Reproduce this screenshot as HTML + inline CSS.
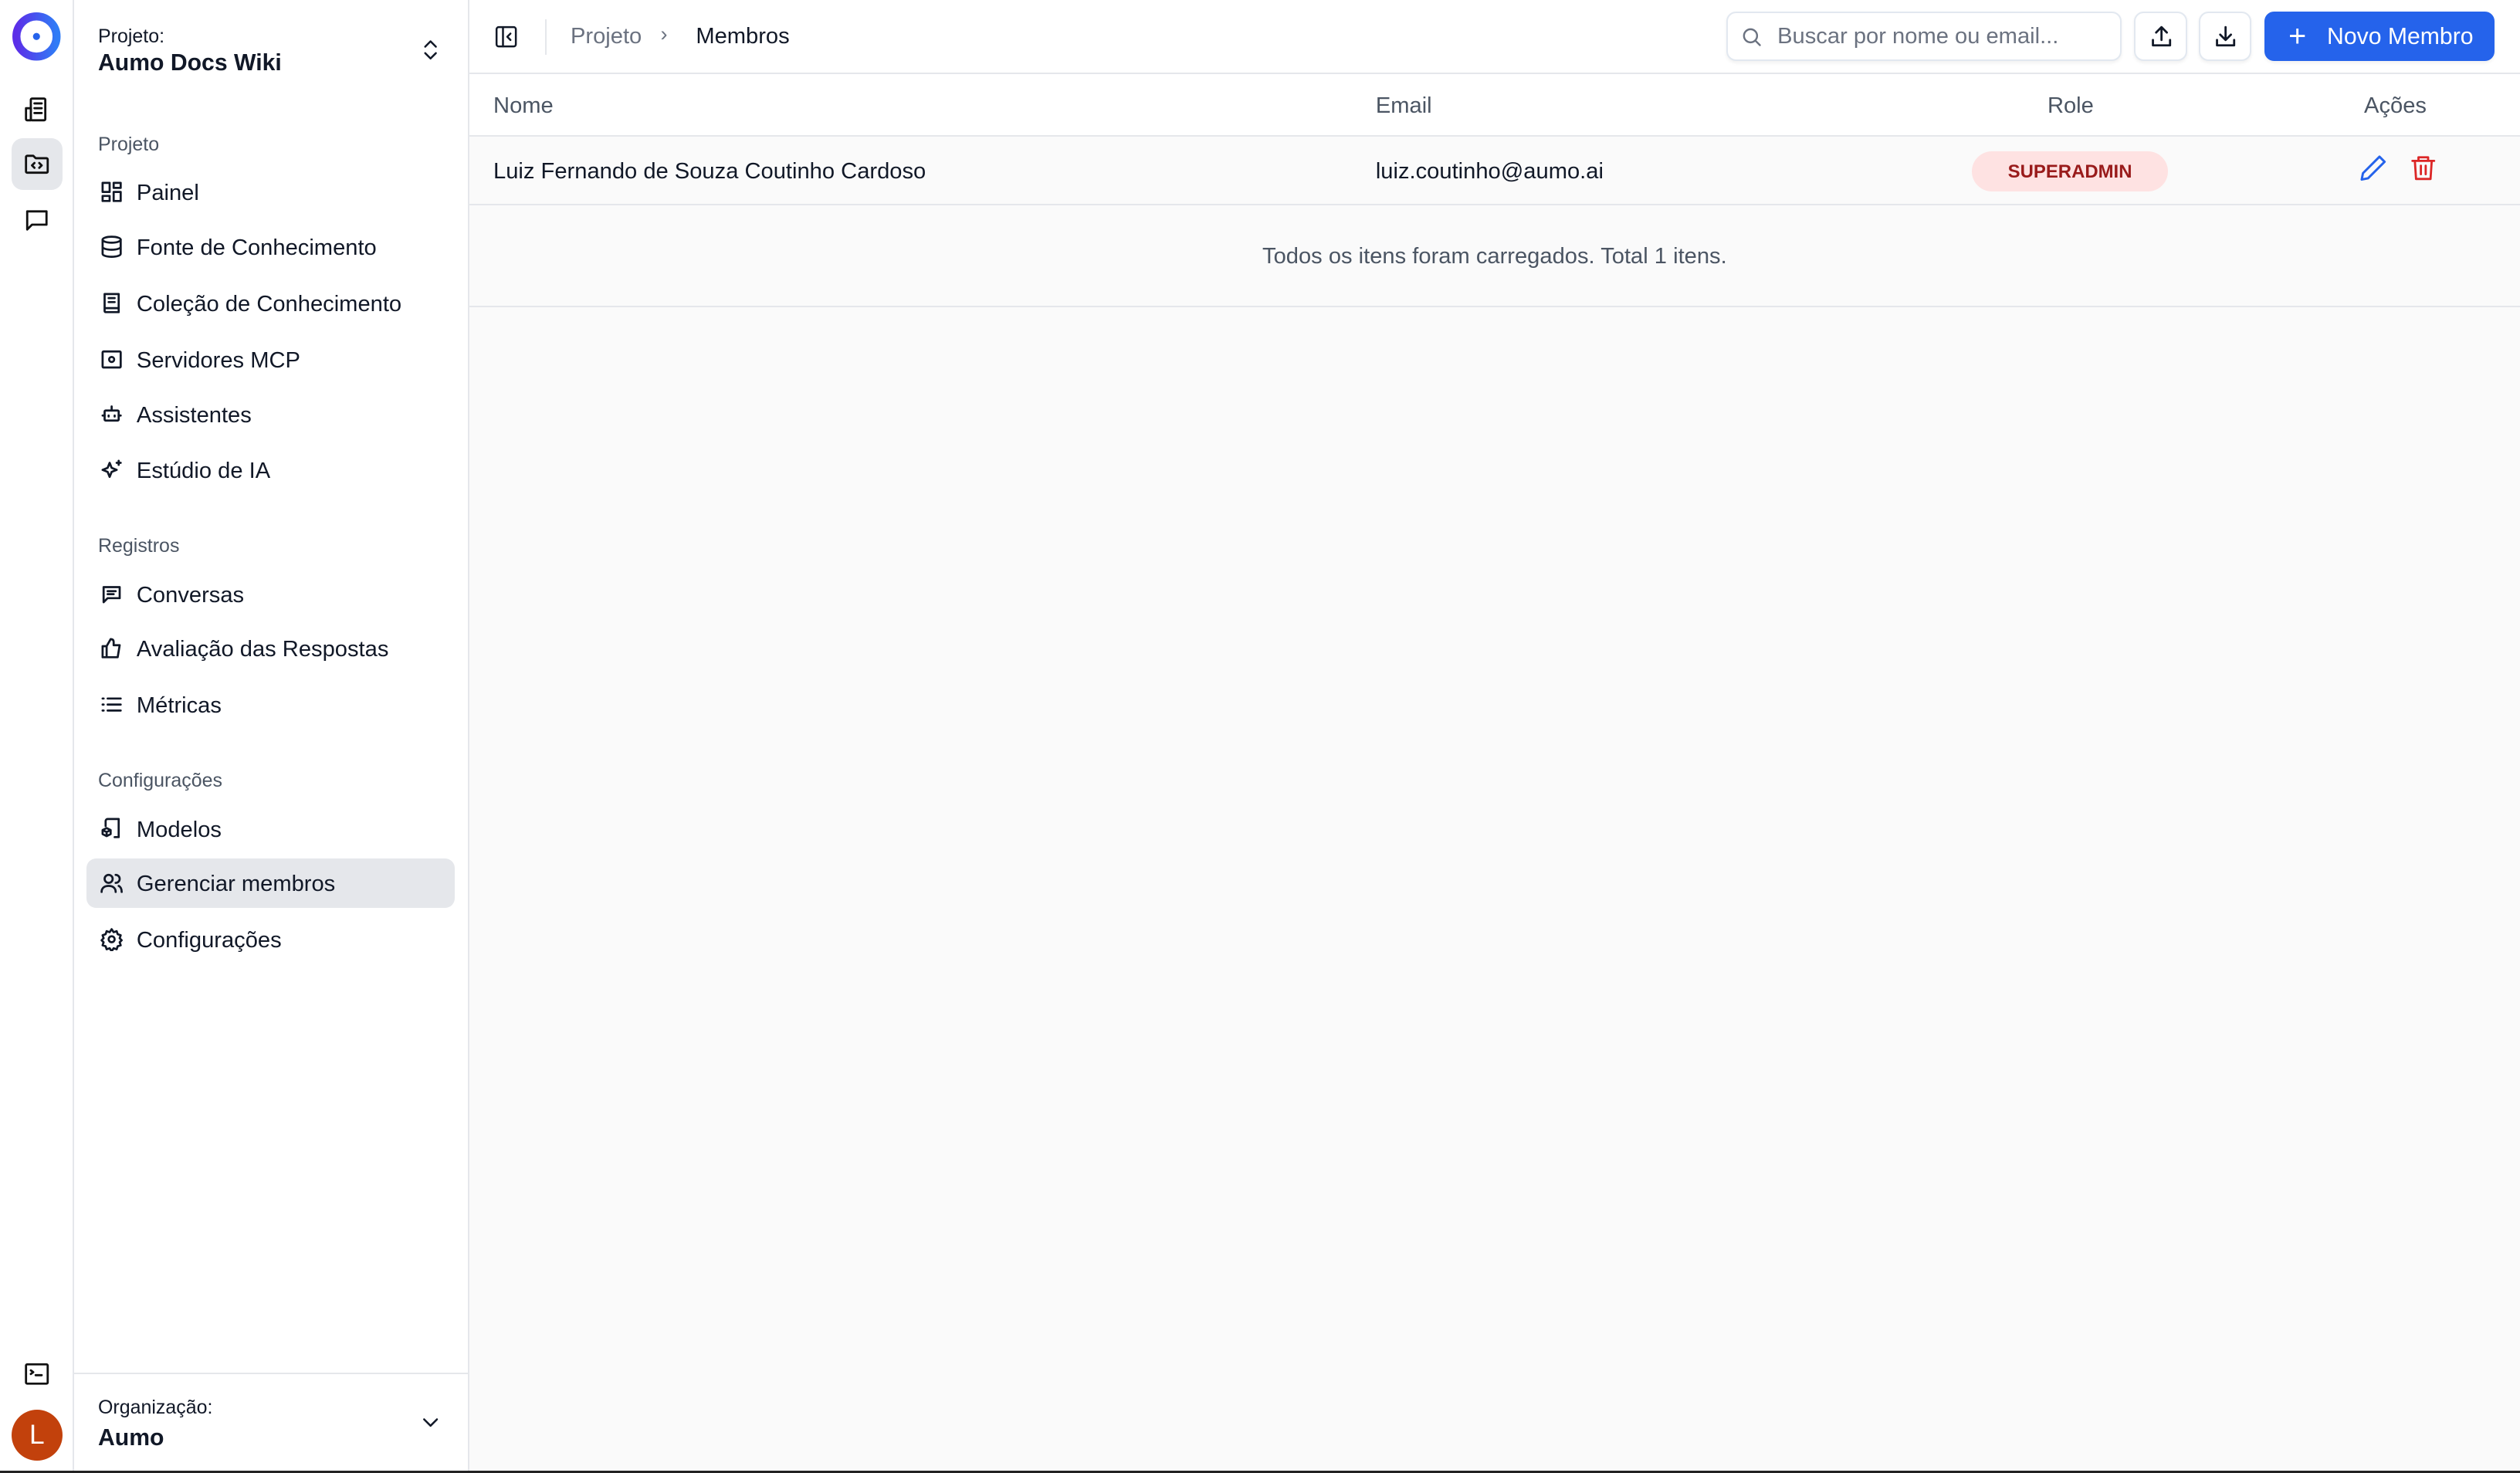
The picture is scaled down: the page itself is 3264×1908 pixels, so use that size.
<!DOCTYPE html>
<html><head><meta charset="utf-8"><style>
*{box-sizing:border-box;margin:0;padding:0}
html,body{width:3264px;height:1908px;overflow:hidden;background:#fafafa}
#r{zoom:2.0816;width:1568px;height:917px;position:relative;font-family:"Liberation Sans",sans-serif;color:#111827}
.rail{position:absolute;left:0;top:0;width:46px;height:917px;background:#fff;border-right:1px solid #e5e7eb}
.side{position:absolute;left:46px;top:0;width:246px;height:917px;background:#fff;border-right:1px solid #e5e7eb}
.main{position:absolute;left:292px;top:0;right:0;height:917px;background:#fafafa}
svg{fill:none;stroke:currentColor;stroke-width:1.8;stroke-linecap:round;stroke-linejoin:round}
.ri{position:absolute;left:14px;width:18px;height:18px;color:#111}
.it{position:absolute;left:8px;width:229px;height:31px;font-size:14px;display:flex;align-items:center;padding-left:8px;padding-top:2px;border-radius:6px}
.it svg{width:15px;height:15px;margin-right:8px;stroke-width:2.1;margin-top:-2px}
.sec{position:absolute;left:15px;font-size:12px;color:#4b5563}
.top{position:absolute;left:0;top:0;right:0;height:46px;background:#fff;border-bottom:1px solid #e5e7eb}
.btn{position:absolute;top:7px;height:31px;border:1px solid #e2e8f0;border-radius:6px;background:#fff;box-shadow:0 1px 2px rgba(0,0,0,.06)}
</style></head><body><div id="r">
<div class="rail">
<svg style="position:absolute;left:7px;top:7px;width:31px;height:31px;stroke:none" viewBox="0 0 31 31"><defs><linearGradient id="g" x1="0" x2="1"><stop offset="0" stop-color="#5b2ee8"/><stop offset="1" stop-color="#2f7cf6"/></linearGradient></defs><circle cx="15.5" cy="15.5" r="12.5" fill="none" stroke="url(#g)" stroke-width="5"/><circle cx="15.5" cy="15.5" r="2.2" fill="#2563eb"/></svg>
<svg class="ri" style="top:59px" viewBox="0 0 24 24"><rect x="7" y="3" width="12" height="18" rx="1"/><path d="M3 11h4v10H4a1 1 0 0 1-1-1zM10 7h6M10 11h6M10 15h6"/></svg>
<div style="position:absolute;left:7px;top:86px;width:32px;height:32px;background:#e5e7eb;border-radius:7px"></div>
<svg class="ri" style="top:93px" viewBox="0 0 24 24"><path d="M3 6a1 1 0 0 1 1-1h5l2 2h9a1 1 0 0 1 1 1v10a1 1 0 0 1-1 1H4a1 1 0 0 1-1-1z"/><path d="M10 11l-2 2 2 2M14 11l2 2-2 2"/></svg>
<svg class="ri" style="top:128px" viewBox="0 0 24 24"><path d="M4 5h16v11H8l-4 4z"/></svg>
<svg class="ri" style="top:846px" viewBox="0 0 24 24"><rect x="3" y="4" width="18" height="16" rx="1"/><path d="M7 9l2 1.5L7 12M11 13h5"/></svg>
<div style="position:absolute;left:7px;top:877px;width:32px;height:32px;border-radius:50%;background:#c2410c;color:#fff;font-size:17px;text-align:center;line-height:32px">L</div>
</div>
<div class="side">
<div style="position:absolute;left:15px;top:16px;font-size:12px">Projeto:</div>
<div style="position:absolute;left:15px;top:31px;font-size:14.5px;font-weight:bold">Aumo Docs Wiki</div>
<svg style="position:absolute;left:214px;top:23px;width:16px;height:16px" viewBox="0 0 24 24"><path d="M7 9l5-5 5 5M7 15l5 5 5-5"/></svg>
<div class="sec" style="top:83px">Projeto</div>
<div class="it" style="top:104px"><svg viewBox="0 0 24 24"><rect x="3" y="3" width="7" height="9"/><rect x="14" y="3" width="7" height="5"/><rect x="14" y="12" width="7" height="9"/><rect x="3" y="16" width="7" height="5"/></svg>Painel</div>
<div class="it" style="top:138px"><svg viewBox="0 0 24 24"><ellipse cx="12" cy="5" rx="9" ry="3"/><path d="M3 5v14c0 1.7 4 3 9 3s9-1.3 9-3V5M3 12c0 1.7 4 3 9 3s9-1.3 9-3"/></svg>Fonte de Conhecimento</div>
<div class="it" style="top:173px"><svg viewBox="0 0 24 24"><path d="M5 3h14v18H6a1 1 0 0 1-1-1zM5 17h14M9 7h6M9 11h6"/></svg>Coleção de Conhecimento</div>
<div class="it" style="top:208px"><svg viewBox="0 0 24 24"><rect x="3" y="4" width="18" height="16" rx="1"/><circle cx="12" cy="12" r="2.5"/></svg>Servidores MCP</div>
<div class="it" style="top:242px"><svg viewBox="0 0 24 24"><rect x="5" y="9" width="14" height="10" rx="1"/><path d="M12 9V5M3 14h2M19 14h2M9 14v1M15 14v1"/></svg>Assistentes</div>
<div class="it" style="top:277px"><svg viewBox="0 0 24 24"><path d="M10 5l2 5 5 2-5 2-2 5-2-5-5-2 5-2zM19 3v4M17 5h4"/></svg>Estúdio de IA</div>
<div class="sec" style="top:333px">Registros</div>
<div class="it" style="top:354px"><svg viewBox="0 0 24 24"><path d="M4 5h16v11H8l-4 4zM8 9h8M8 12h6"/></svg>Conversas</div>
<div class="it" style="top:388px"><svg viewBox="0 0 24 24"><path d="M7 10v11H3V10zM7 10l4-7c2 0 3 1 3 3v3h6l-2 12H7"/></svg>Avaliação das Respostas</div>
<div class="it" style="top:423px"><svg viewBox="0 0 24 24"><path d="M3 6h1M3 12h1M3 18h1M8 6h13M8 12h13M8 18h13"/></svg>Métricas</div>
<div class="sec" style="top:479px">Configurações</div>
<div class="it" style="top:500px"><svg viewBox="0 0 24 24"><path d="M13 3h6v18h-4M6 10V5a2 2 0 0 1 2-2h5"/><path d="M3 14l4-2 4 2v4l-4 2-4-2zM3 14l4 2 4-2M7 16v4"/></svg>Modelos</div>
<div class="it" style="top:534px;background:#e5e7eb"><svg viewBox="0 0 24 24"><circle cx="9" cy="8" r="4"/><path d="M2 21c0-4 3-6 7-6s7 2 7 6M16 4a4 4 0 0 1 0 8M19 15c2 1 3 3 3 6"/></svg>Gerenciar membros</div>
<div class="it" style="top:569px"><svg viewBox="0 0 24 24"><circle cx="12" cy="12" r="3"/><path d="M12 2l2 3 3-1 1 3 3 1-1 3 2 2-2 2 1 3-3 1-1 3-3-1-2 3-2-3-3 1-1-3-3-1 1-3-2-2 2-2-1-3 3-1 1-3 3 1z"/></svg>Configurações</div>
<div style="position:absolute;left:0;right:0;top:854px;border-top:1px solid #e5e7eb"></div>
<div style="position:absolute;left:15px;top:869px;font-size:12px">Organização:</div>
<div style="position:absolute;left:15px;top:887px;font-size:14.5px;font-weight:bold">Aumo</div>
<svg style="position:absolute;left:214px;top:877px;width:16px;height:16px" viewBox="0 0 24 24"><path d="M6 9l6 6 6-6"/></svg>
</div>
<div class="main">
<div class="top">
<svg style="position:absolute;left:15px;top:15px;width:16px;height:16px" viewBox="0 0 24 24"><rect x="3" y="3" width="18" height="18" rx="2"/><path d="M9 3v18M16 9l-3 3 3 3"/></svg>
<div style="position:absolute;left:47px;top:12px;height:22px;border-left:1px solid #e5e7eb"></div>
<div style="position:absolute;left:63px;top:15px;font-size:14px;color:#6b7280">Projeto</div>
<div style="position:absolute;left:119px;top:14px;font-size:13px;color:#6b7280">›</div>
<div style="position:absolute;left:141px;top:15px;font-size:14px">Membros</div>
<div class="btn" style="left:782px;width:246px"><svg style="position:absolute;left:8px;top:8px;width:14px;height:14px;color:#6b7280;stroke-width:2" viewBox="0 0 24 24"><circle cx="11" cy="11" r="7"/><path d="M16 16l5 5"/></svg><span style="position:absolute;left:31px;top:7px;font-size:14px;color:#6b7280">Buscar por nome ou email...</span></div>
<div class="btn" style="left:1036px;width:33px"><svg style="position:absolute;left:8px;top:7px;width:16px;height:16px;stroke-width:2" viewBox="0 0 24 24"><path d="M12 15V3M7 8l5-5 5 5M4 15v5h16v-5"/></svg></div>
<div class="btn" style="left:1076px;width:33px"><svg style="position:absolute;left:8px;top:7px;width:16px;height:16px;stroke-width:2" viewBox="0 0 24 24"><path d="M12 3v12M7 10l5 5 5-5M4 15v5h16v-5"/></svg></div>
<div class="btn" style="left:1117px;width:143px;background:#2563eb;border-color:#2563eb;color:#fff;font-size:14.5px"><span style="position:absolute;left:14px;top:4px;font-size:19px">+</span><span style="position:absolute;left:38px;top:7px">Novo Membro</span></div>
</div>
<div style="position:absolute;left:0;right:0;top:46px;height:39px;background:#fff;border-bottom:1px solid #e5e7eb;font-size:14px;color:#4b5563">
<span style="position:absolute;left:15px;top:12px">Nome</span><span style="position:absolute;left:564px;top:12px">Email</span><span style="position:absolute;left:982px;top:12px">Role</span><span style="position:absolute;left:1179px;top:12px">Ações</span></div>
<div style="position:absolute;left:0;right:0;top:85px;height:43px;background:#fafafa;border-bottom:1px solid #e5e7eb;font-size:14px">
<span style="position:absolute;left:15px;top:14px">Luiz Fernando de Souza Coutinho Cardoso</span><span style="position:absolute;left:564px;top:14px">luiz.coutinho@aumo.ai</span>
<span style="position:absolute;left:935px;top:9px;width:122px;height:25px;border-radius:13px;background:#fee2e2;color:#991b1b;font-size:11.5px;font-weight:bold;text-align:center;line-height:26px">SUPERADMIN</span>
<svg style="position:absolute;left:1175px;top:10px;width:19px;height:19px;color:#2563eb" viewBox="0 0 24 24"><path d="M17 3l4 4L8 20l-5 1 1-5z"/></svg>
<svg style="position:absolute;left:1207px;top:10px;width:18px;height:19px;color:#dc2626" viewBox="0 0 24 24"><path d="M3 6h18M8 6V3h8v3M5 6l1 15h12l1-15M10 10v7M14 10v7"/></svg>
</div>
<div style="position:absolute;left:0;right:0;top:128px;height:63px;border-bottom:1px solid #e5e7eb;text-align:center;line-height:64px;font-size:14px;color:#4b5563">Todos os itens foram carregados. Total 1 itens.</div>
</div>
<div style="position:absolute;left:0;right:0;top:915px;height:2px;background:#222"></div>
</div></body></html>
